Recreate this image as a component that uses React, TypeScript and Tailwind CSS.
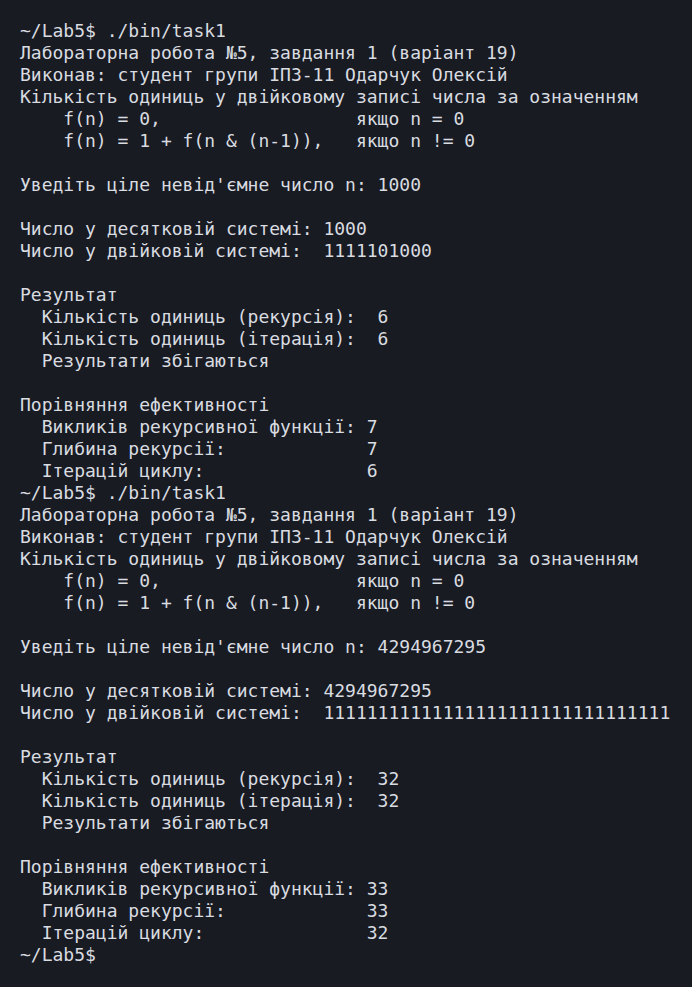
import React from "react";

const run = (n: string, dec: string, bin: string, ones: string, calls: string) => [
  "~/Lab5$ ./bin/task1",
  "Лабораторна робота №5, завдання 1 (варіант 19)",
  "Виконав: студент групи ІПЗ-11 Одарчук Олексій",
  "Кількість одиниць у двійковому записі числа за означенням",
  "    f(n) = 0,                  якщо n = 0",
  "    f(n) = 1 + f(n & (n-1)),   якщо n != 0",
  "",
  `Уведіть ціле невід'ємне число n: ${n}`,
  "",
  `Число у десятковій системі: ${dec}`,
  `Число у двійковій системі:  ${bin}`,
  "",
  "Результат",
  `  Кількість одиниць (рекурсія):  ${ones}`,
  `  Кількість одиниць (ітерація):  ${ones}`,
  "  Результати збігаються",
  "",
  "Порівняння ефективності",
  `  Викликів рекурсивної функції: ${calls}`,
  `  Глибина рекурсії:             ${calls}`,
  `  Ітерацій циклу:               ${ones}`,
];

const lines = [
  ...run("1000", "1000", "1111101000", "6", "7"),
  ...run("4294967295", "4294967295", "11111111111111111111111111111111", "32", "33"),
  "~/Lab5$",
];

const App = () => {
  return (
    <div className="min-h-[987px] w-[692px] bg-[#181b22] pt-5 px-5 text-[#d9dce0] text-[18px] leading-[22px] font-['DejaVu_Sans_Mono',monospace] whitespace-pre overflow-hidden">
      {lines.map((l, i) => (
        <div key={i} className="h-[22px]">
          {l}
        </div>
      ))}
    </div>
  );
};

export default App;
